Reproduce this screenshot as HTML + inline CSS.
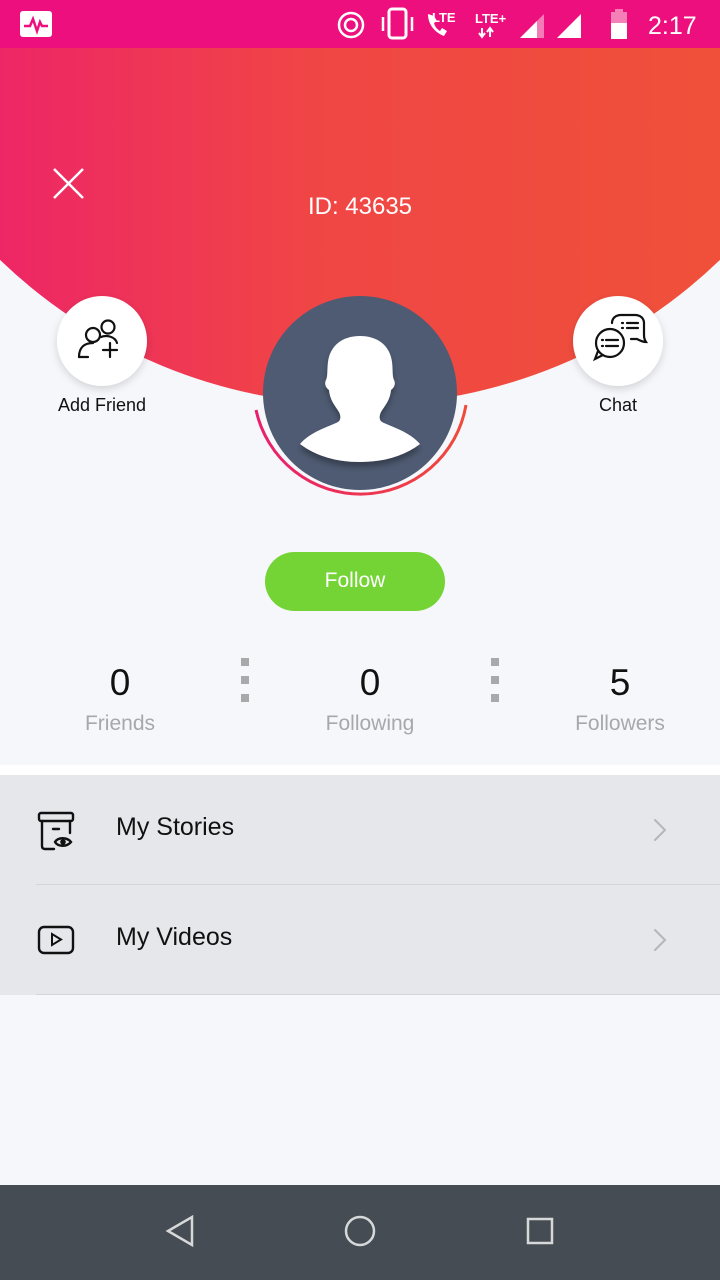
<!DOCTYPE html>
<html><head><meta charset="utf-8"><style>
*{margin:0;padding:0;box-sizing:border-box}
body{width:720px;height:1280px;overflow:hidden;background:#f6f7fb;font-family:"Liberation Sans",sans-serif;position:relative}
.abs{position:absolute}
.t{position:absolute;text-align:center;white-space:nowrap}
</style></head><body>
<svg class="abs" style="left:0;top:0" width="720" height="520">
<defs>
<linearGradient id="g" x1="0" x2="1" y1="0" y2="0">
<stop offset="0" stop-color="#ec1677"/><stop offset="0.45" stop-color="#f04545"/><stop offset="1" stop-color="#f05535"/></linearGradient>
<linearGradient id="r" x1="0" x2="1"><stop offset="0" stop-color="#e81f6e"/><stop offset="1" stop-color="#f04a3a"/></linearGradient>
<filter id="sh" x="-30%" y="-30%" width="160%" height="160%"><feDropShadow dx="0" dy="3" stdDeviation="4" flood-opacity="0.15"/></filter>
<filter id="sh2" x="-30%" y="-30%" width="160%" height="160%"><feDropShadow dx="0" dy="5" stdDeviation="3" flood-opacity="0.3"/></filter>
</defs>
<circle cx="360" cy="-114" r="519" fill="url(#g)"/>
<rect x="0" y="0" width="720" height="48" fill="#ed0f7e"/>
<rect x="20" y="11" width="32" height="26" rx="3" fill="#fff"/>
<path d="M24 26h6l3-7 4 12 3-9 2 4h6" stroke="#ed0f7e" stroke-width="2.5" fill="none"/>
<circle cx="351" cy="25" r="12" fill="none" stroke="#fff" stroke-width="2.5"/>
<circle cx="351" cy="25" r="6" fill="none" stroke="#fff" stroke-width="2.5"/>
<rect x="389" y="9" width="17" height="29" rx="3" fill="none" stroke="#fff" stroke-width="3"/>
<path d="M383 17v14M412 17v14" stroke="#fff" stroke-width="2.5"/>
<path d="M428 14c0 10 6 18 16 22l3-5-5-3-2 3c-3-2-5-4-6-8l3-2-3-5z" fill="#fff"/>
<text x="432" y="22" fill="#fff" font-size="13" font-weight="bold">LTE</text>
<text x="475" y="23" fill="#fff" font-size="13" font-weight="bold">LTE+</text>
<path d="M482 28v8M479 33l3 4 3-4M490 37v-8M487 32l3-4 3 4" stroke="#fff" stroke-width="2" fill="none"/>
<path d="M520 38l24-24v24z" fill="#fff" opacity=".45"/><path d="M520 38l17-17v17z" fill="#fff"/>
<path d="M557 38l24-24v24z" fill="#fff"/>
<rect x="611" y="12" width="16" height="27" fill="#f580b8"/><rect x="615" y="9" width="8" height="3" fill="#f580b8"/>
<rect x="611" y="23" width="16" height="16" fill="#fff"/>
<text x="648" y="34" fill="#fff" font-size="25">2:17</text>
<path d="M54 169l29 29M83 169l-29 29" stroke="#fff" stroke-width="2.5"/>
<circle cx="102" cy="341" r="45" fill="#fff" filter="url(#sh)"/>
<circle cx="618" cy="341" r="45" fill="#fff" filter="url(#sh)"/>
<g fill="none" stroke="#111" stroke-width="2.2" stroke-linecap="round">
<circle cx="93" cy="335" r="7"/><path d="M79 357c0-10 6-14 14-14"/><path d="M79 357h9"/>
<circle cx="108" cy="327" r="6.5"/><path d="M101 337c5-2 14-1 16 6"/>
<path d="M110 343v14M103 350h14"/>
<path d="M612 323c0-5 4-8 9-8h14c5 0 9 3 9 8v10c0 4 0 6 2 9-4 0-7-2-9-3h-6"/>
<path d="M627 323h11M627 328h11"/><path d="M622 323h1M622 328h1"/>
<circle cx="610" cy="343" r="14"/><path d="M598 351l-3 8 8-4"/>
<path d="M606 340h12M606 346h12M602 340h1M602 346h1"/>
</g>
<path d="M256 410 A107 107 0 0 0 466 405" fill="none" stroke="url(#r)" stroke-width="3"/>
<circle cx="360" cy="393" r="97" fill="#4e5b72"/>
<path d="M300 444c10-12 28-17 38-22 3-2 3-6 1-10-5-8-9-12-10-22-3-2-5-6-3-10 2-4 1-12 2-18 2-16 14-26 32-26s30 10 32 26c1 6 0 14 2 18 2 4 0 8-3 10-1 10-5 14-10 22-2 4-2 8 1 10 10 5 28 10 38 22-16 12-36 18-60 18s-44-6-60-18z" fill="#fff" filter="url(#sh2)"/>
</svg>
<div class="t" style="left:0;width:720px;top:193px;color:#fff;font-size:24px">ID: 43635</div>
<div class="t" style="left:2px;width:200px;top:395px;font-size:18px;color:#111">Add Friend</div>
<div class="t" style="left:518px;width:200px;top:395px;font-size:18px;color:#111">Chat</div>
<div class="abs" style="left:265px;top:552px;width:180px;height:59px;border-radius:30px;background:#74d435;color:#fff;font-size:21px;text-align:center;line-height:57px">Follow</div>
<div class="t" style="left:20px;width:200px;top:662px;font-size:37px;color:#111">0</div>
<div class="t" style="left:270px;width:200px;top:662px;font-size:37px;color:#111">0</div>
<div class="t" style="left:520px;width:200px;top:662px;font-size:37px;color:#111">5</div>
<div class="t" style="left:20px;width:200px;top:712px;font-size:21px;color:#a7a8ac">Friends</div>
<div class="t" style="left:270px;width:200px;top:712px;font-size:21px;color:#a7a8ac">Following</div>
<div class="t" style="left:520px;width:200px;top:712px;font-size:21px;color:#a7a8ac">Followers</div>
<svg class="abs" style="left:0;top:650px" width="720" height="60" fill="#a9a9ab">
<rect x="241" y="8" width="8" height="8"/><rect x="241" y="26" width="8" height="8"/><rect x="241" y="44" width="8" height="8"/>
<rect x="491" y="8" width="8" height="8"/><rect x="491" y="26" width="8" height="8"/><rect x="491" y="44" width="8" height="8"/>
</svg>
<div class="abs" style="left:0;top:765px;width:720px;height:10px;background:#fff"></div>
<div class="abs" style="left:0;top:775px;width:720px;height:220px;background:#e6e7eb"></div>
<div class="abs" style="left:36px;top:884px;width:684px;height:1px;background:#d5d6da"></div>
<div class="abs" style="left:36px;top:994px;width:684px;height:1px;background:#d5d6da"></div>
<div class="abs" style="left:116px;top:813px;font-size:25px;color:#111">My Stories</div>
<div class="abs" style="left:116px;top:923px;font-size:25px;color:#111">My Videos</div>
<svg class="abs" style="left:0;top:775px" width="720" height="220" fill="none" stroke="#111" stroke-width="2.4" stroke-linecap="round">
<rect x="39" y="38" width="34" height="8" rx="2"/>
<path d="M42 46v25c0 2 1 3 3 3h9M70 46v12M53 54h6"/>
<path d="M55 67c3-5 12-5 16 0-4 5-13 5-16 0z"/><circle cx="63" cy="67" r="1.6" fill="#111"/>
<path d="M655 45l10 10-10 10" stroke="#b5b6ba" stroke-width="2"/>
<rect x="39" y="152" width="34" height="26" rx="5"/>
<path d="M52 159v11l9-5.5z" stroke-width="2"/>
<path d="M655 155l10 10-10 10" stroke="#b5b6ba" stroke-width="2"/>
</svg>
<div class="abs" style="left:0;top:1185px;width:720px;height:95px;background:#464c53"></div>
<svg class="abs" style="left:0;top:1185px" width="720" height="95" fill="none" stroke="#d6d8da" stroke-width="2.5">
<path d="M192 32v28l-24-14z"/><circle cx="360" cy="46" r="14"/><rect x="528" y="34" width="24" height="24"/>
</svg>
</body></html>
